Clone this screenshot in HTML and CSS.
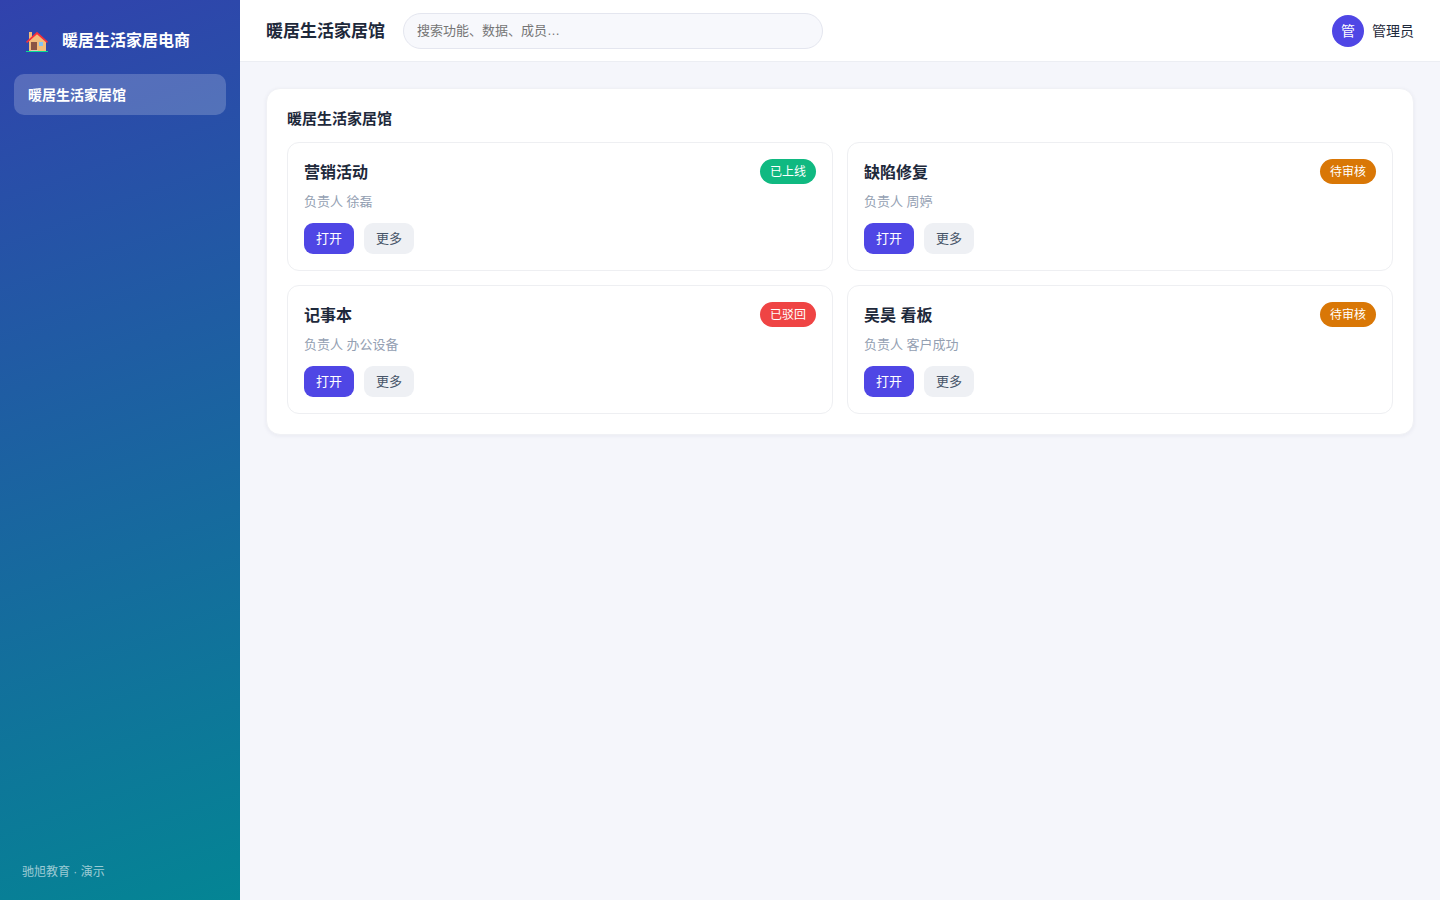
FILE: index.html
```html
<!DOCTYPE html>
<html lang="zh-CN">
<head>
<meta charset="utf-8">
<meta name="viewport" content="width=device-width, initial-scale=1">
<title>暖居生活家居馆</title>
<link rel="stylesheet" href="styles.css">
</head>
<body>
<div class="app">
  <aside class="sidebar">
    <div class="brand">
      <svg class="brand-icon" viewBox="0 0 22 24" aria-hidden="true">
        <path fill="#f2bd7c" d="M3 4h3v7H3zM11 5l9 8v10H3V13z"/>
        <path fill="#8b5545" d="M5 14h6v8H5z"/>
        <path fill="#dcc8ba" d="M5 22h7v1H5z"/>
        <path fill="#81c3f5" d="M13 14h4v4h-4z"/>
        <path fill="none" stroke="#f6303b" stroke-width="1.8" d="M0.5 14.4L11 5l10.5 9.4"/>
        <path fill="#08dd94" d="M0 23h22v1H0z"/>
      </svg>
      <span>暖居生活家居电商</span>
    </div>
    <nav class="nav"><a class="nav-link" href="#" aria-current="page">暖居生活家居馆</a></nav>
    <div class="sidebar-foot">驰旭教育 · 演示</div>
  </aside>
  <div class="main">
    <header class="topbar">
      <h1 class="page-title">暖居生活家居馆</h1>
      <input class="search" type="search" aria-label="搜索" placeholder="搜索功能、数据、成员…">
      <div class="user"><span class="avatar">管</span><span class="user-name">管理员</span></div>
    </header>
    <main class="content">
      <section class="panel">
        <h2 class="panel-title">暖居生活家居馆</h2>
        <div class="cards">
          <article class="card">
            <div class="card-head"><h3 class="card-title">营销活动</h3><span class="badge badge-green">已上线</span></div>
            <p class="meta">负责人 徐磊</p>
            <div class="actions"><button class="btn btn-primary" type="button">打开</button><button class="btn" type="button">更多</button></div>
          </article>
          <article class="card">
            <div class="card-head"><h3 class="card-title">缺陷修复</h3><span class="badge badge-amber">待审核</span></div>
            <p class="meta">负责人 周婷</p>
            <div class="actions"><button class="btn btn-primary" type="button">打开</button><button class="btn" type="button">更多</button></div>
          </article>
          <article class="card">
            <div class="card-head"><h3 class="card-title">记事本</h3><span class="badge badge-red">已驳回</span></div>
            <p class="meta">负责人 办公设备</p>
            <div class="actions"><button class="btn btn-primary" type="button">打开</button><button class="btn" type="button">更多</button></div>
          </article>
          <article class="card">
            <div class="card-head"><h3 class="card-title">吴昊 看板</h3><span class="badge badge-amber">待审核</span></div>
            <p class="meta">负责人 客户成功</p>
            <div class="actions"><button class="btn btn-primary" type="button">打开</button><button class="btn" type="button">更多</button></div>
          </article>
        </div>
      </section>
    </main>
  </div>
</div>
</body>
</html>
```

FILE: styles.css
```css
* {
  box-sizing: border-box;
}

body {
  margin: 0;
  background: #f5f6fb;
  color: #1e293b;
  font-family: "Liberation Sans", "Noto Sans CJK SC", sans-serif;
  font-size: 14px;
  line-height: 21px;
}

h1, h2, h3, p {
  margin: 0;
}

.app {
  display: flex;
  min-height: 100vh;
}

.sidebar {
  flex: 0 0 240px;
  display: flex;
  flex-direction: column;
  padding: 22px 14px 17px;
  color: #fff;
  background: linear-gradient(160deg, #3142ad, #048594);
}

.brand {
  display: flex;
  align-items: center;
  gap: 14px;
  height: 36px;
  padding: 0 12px;
  font-size: 16px;
  font-weight: 700;
}

.brand-icon {
  width: 22px;
  height: 24px;
}

.nav {
  flex: 1;
  padding-top: 16px;
}

.nav-link {
  display: block;
  padding: 11px 14px 9px;
  border-radius: 10px;
  background: rgba(255, 255, 255, 0.2);
  color: #fff;
  font-weight: 600;
  text-decoration: none;
}

.sidebar-foot {
  padding: 0 8px;
  color: rgba(255, 255, 255, 0.6);
  font-size: 12px;
}

.main {
  flex: 1;
  min-width: 0;
}

.topbar {
  display: flex;
  align-items: center;
  gap: 18px;
  height: 62px;
  padding: 0 26px;
  border-bottom: 1px solid #eceef3;
  background: #fff;
}

.page-title {
  padding-top: 2px;
  font-size: 17px;
  font-weight: 700;
}

.search {
  flex: 0 1 420px;
  min-width: 0;
  height: 36px;
  padding: 0 13px;
  border: 1px solid #e4e6ef;
  border-radius: 18px;
  background: #f7f8fc;
  font: 13px "Liberation Sans", "Noto Sans CJK SC", sans-serif;
  appearance: none;
}

.search::placeholder {
  color: #757575;
}

.user {
  display: flex;
  align-items: center;
  gap: 8px;
  margin-left: auto;
}

.user-name {
  padding-top: 2px;
}

.avatar {
  width: 32px;
  height: 32px;
  border-radius: 50%;
  background: #4f46e5;
  color: #fff;
  line-height: 32px;
  text-align: center;
}

.content {
  padding: 26px;
}

.panel {
  padding: 20px;
  border: 1px solid #f0f1f5;
  border-radius: 14px;
  background: #fff;
  box-shadow: 0 1px 4px rgba(30, 41, 90, 0.06);
}

.panel-title {
  margin-bottom: 14px;
  font-size: 15px;
  font-weight: 700;
  line-height: 19px;
}

.cards {
  display: grid;
  grid-template-columns: repeat(2, minmax(0, 1fr));
  gap: 14px;
}

.card {
  padding: 16px;
  border: 1px solid #eeeff2;
  border-radius: 12px;
}

.card-head {
  display: flex;
  align-items: center;
  justify-content: space-between;
}

.card-title {
  padding-top: 2px;
  font-size: 16px;
  font-weight: 700;
}

.badge {
  padding: 3px 10px 1px;
  border-radius: 13px;
  color: #fff;
  font-size: 12px;
}

.badge-green { background: #10b981; }
.badge-amber { background: #d97706; }
.badge-red { background: #ef4444; }

.meta {
  margin: 7px 0 11px;
  color: #94a0b2;
  font-size: 13px;
}

.actions {
  display: flex;
  gap: 10px;
}

.btn {
  height: 31px;
  padding: 0 12px 2px;
  border: 0;
  border-radius: 9px;
  background: #eef0f4;
  color: #475569;
  font: 13px "Liberation Sans", "Noto Sans CJK SC", sans-serif;
}

.btn-primary {
  background: #4f46e5;
  color: #fff;
}
```
